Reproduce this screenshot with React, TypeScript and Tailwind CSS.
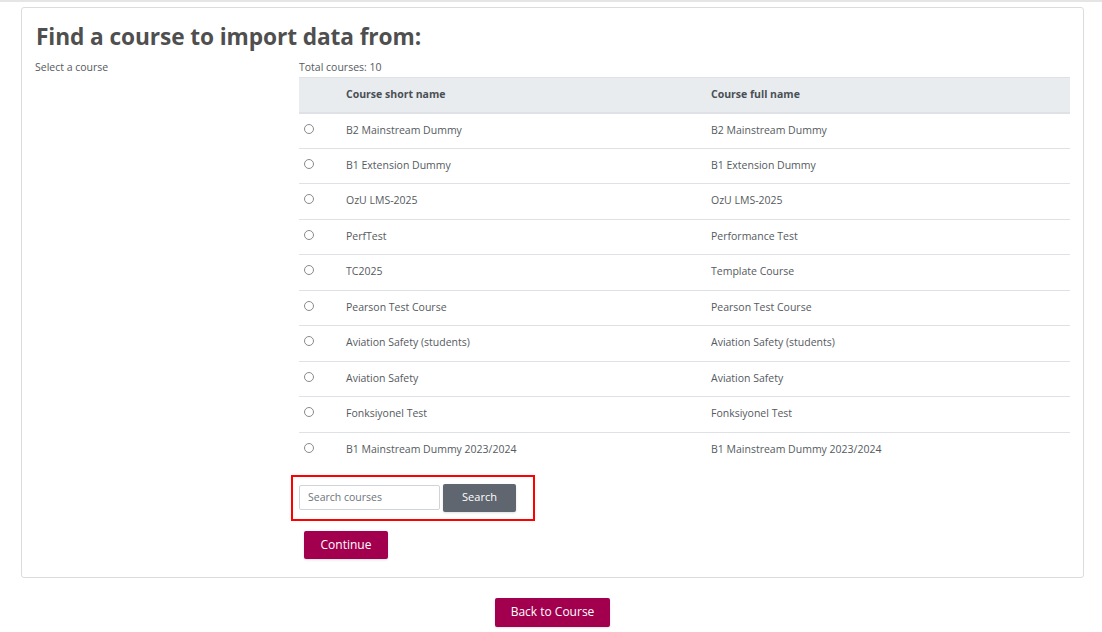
const courses = [
  { short: 'B2 Mainstream Dummy', full: 'B2 Mainstream Dummy' },
  { short: 'B1 Extension Dummy', full: 'B1 Extension Dummy' },
  { short: 'OzU LMS-2025', full: 'OzU LMS-2025' },
  { short: 'PerfTest', full: 'Performance Test' },
  { short: 'TC2025', full: 'Template Course' },
  { short: 'Pearson Test Course', full: 'Pearson Test Course' },
  { short: 'Aviation Safety (students)', full: 'Aviation Safety (students)' },
  { short: 'Aviation Safety', full: 'Aviation Safety' },
  { short: 'Fonksiyonel Test', full: 'Fonksiyonel Test' },
  { short: 'B1 Mainstream Dummy 2023/2024', full: 'B1 Mainstream Dummy 2023/2024' },
];

export default function App() {
  return (
    <div
      className="min-h-[632px] bg-white border-t-2 border-[#e5e5e5] text-[#555a60]"
      style={{ fontFamily: '"Open Sans", "Noto Sans", sans-serif' }}
    >
      <div className="pl-[21px] pr-[18px] pt-[5px]">
        {/* Import card */}
        <div className="border border-[#dcdcdc] rounded-[3px] pl-[13px] pr-[13px] pt-[14px] pb-[18px]">
          <h2 className="ml-[1px] text-[22.7px] leading-[30px] font-bold text-[#4f4f4f] tracking-[-0.1px]">
            Find a course to import data from:
          </h2>

          <div className="flex mt-[7px]">
            <div className="w-[264px] shrink-0 text-[10.5px] leading-[16px]">Select a course</div>

            <div className="flex-1">
              <div className="text-[10.5px] leading-[16px]">Total courses: 10</div>

              <table className="w-full mt-[2px] border-collapse text-[10.5px]">
                <thead>
                  <tr className="bg-[#e9ecef] border-t border-[#dee2e6] border-b-2">
                    <th className="w-[35px] h-[35px]"></th>
                    <th className="w-[365px] text-left font-bold text-[#4a4f55] pl-[12px]">Course short name</th>
                    <th className="text-left font-bold text-[#4a4f55] pl-[12px]">Course full name</th>
                  </tr>
                </thead>
                <tbody>
                  {courses.map((c, i) => (
                    <tr
                      key={c.short}
                      className={i < courses.length - 1 ? 'border-b border-[#dee2e6]' : ''}
                    >
                      <td className="h-[35.5px] pl-[5px] align-middle">
                        <span className="block w-[10px] h-[10px] rounded-full border border-[#8a8a8a] -mt-[4px]" />
                      </td>
                      <td className="pl-[12px]">{c.short}</td>
                      <td className="pl-[12px]">{c.full}</td>
                    </tr>
                  ))}
                </tbody>
              </table>

              {/* Search */}
              <div className="-ml-[8px] mt-[7px] w-[244px] h-[46px] border-2 border-[#ff0000] flex items-center pl-[6px] gap-[3px]">
                <div className="w-[141px] h-[25px] border border-[#ced4da] rounded-[2px] flex items-center px-[8px] text-[10.5px] text-[#6c757d]">
                  Search courses
                </div>
                <button className="w-[73px] h-[28px] bg-[#5f6670] text-white text-[11px] rounded-[2px] shadow-sm">
                  Search
                </button>
              </div>

              <button className="ml-[5px] mt-[10px] w-[84px] h-[28px] bg-[#a2004f] text-white text-[12px] rounded-[2px] shadow-sm">
                Continue
              </button>
            </div>
          </div>
        </div>

        <div className="flex justify-center mt-[20px]">
          <button className="w-[115px] h-[29px] bg-[#a2004f] text-white text-[12px] rounded-[2px] shadow-sm">
            Back to Course
          </button>
        </div>
      </div>
    </div>
  );
}
